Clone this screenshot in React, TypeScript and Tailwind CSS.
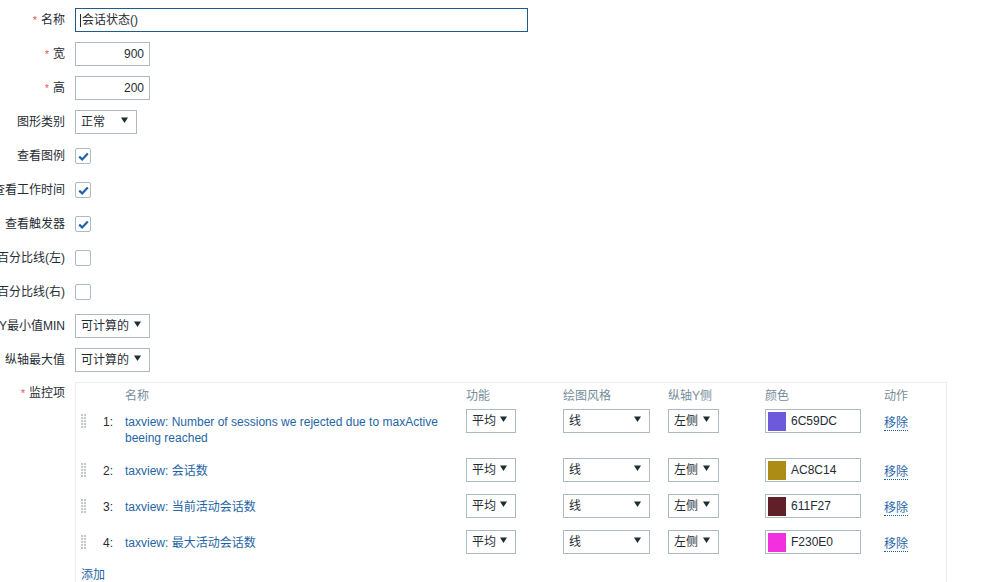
import React from "react";

const FONT = { fontFamily: '"Liberation Sans", Arial, "Noto Sans CJK SC", sans-serif' };

function Arrow() {
  return (
    <svg width="7" height="6" viewBox="0 0 7 6" className="shrink-0 mb-[5px]">
      <polygon points="0,0.5 7,0.5 3.5,6" fill="#1f2c33" />
    </svg>
  );
}

function Select({ value, w }: { value: string; w: string }) {
  return (
    <div
      className={`${w} h-[24px] border border-[#acbbc2] bg-white flex items-center justify-between pl-[5px] pr-[8px] text-[12px] text-[#1f2c33]`}
    >
      <span className="leading-[16px] whitespace-nowrap">{value}</span>
      <Arrow />
    </div>
  );
}

function Check({ on }: { on: boolean }) {
  return (
    <div className="w-[16px] h-[16px] border border-[#acbbc2] rounded-[2px] bg-white flex items-center justify-center">
      {on && (
        <svg width="11" height="9" viewBox="0 0 11 9">
          <path d="M1.2 4.6 L4.2 7.4 L9.8 1.4" fill="none" stroke="#1f65a6" strokeWidth="2.2" />
        </svg>
      )}
    </div>
  );
}

function Label({ text, req }: { text: string; req?: boolean }) {
  return (
    <div className="w-[65px] shrink-0 flex justify-end whitespace-nowrap text-[12px] leading-[16px] text-[#1f2c33]">
      <span>
        {req && <span className="text-[#e45959] text-[11px] align-top mr-[4px]">*</span>}
        {text}
      </span>
    </div>
  );
}

function Row({ label, req, children }: { label: string; req?: boolean; children: React.ReactNode }) {
  return (
    <div className="flex items-center h-[24px] gap-[10px]">
      <Label text={label} req={req} />
      {children}
    </div>
  );
}

function Handle() {
  const dots = [];
  for (let r = 0; r < 5; r++) {
    for (let c = 0; c < 2; c++) {
      dots.push(<rect key={`${r}-${c}`} x={c * 3} y={r * 3} width="2" height="2" fill="#c2c8cc" />);
    }
  }
  return (
    <svg width="5" height="14" viewBox="0 0 5 14" className="mt-[3px]">
      {dots}
    </svg>
  );
}

const items = [
  { n: 1, name: "taxview: Number of sessions we rejected due to maxActive beeing reached", color: "#6C59DC", hex: "6C59DC" },
  { n: 2, name: "taxview: 会话数", color: "#AC8C14", hex: "AC8C14" },
  { n: 3, name: "taxview: 当前活动会话数", color: "#611F27", hex: "611F27" },
  { n: 4, name: "taxview: 最大活动会话数", color: "#F230E0", hex: "F230E0" },
];

const cols = "grid grid-cols-[27px_22px_341px_97px_105px_97px_119px_62px]";

export default function App() {
  return (
    <div style={FONT} className="w-[982px] h-[582px] overflow-hidden bg-white text-[12px] text-[#1f2c33]">
      <div className="pt-[8px] flex flex-col gap-[10px]">
        <Row label="名称" req>
          <div className="w-[453px] h-[24px] border border-[#1f5c87] bg-white flex items-center pl-[4px]">
            <span className="w-px h-[13px] bg-[#1f2c33] mr-[1px]" />
            <span className="leading-[16px]">会话状态()</span>
          </div>
        </Row>
        <Row label="宽" req>
          <div className="w-[75px] h-[24px] border border-[#acbbc2] bg-white flex items-center justify-end pr-[5px]">
            <span className="leading-[16px]">900</span>
          </div>
        </Row>
        <Row label="高" req>
          <div className="w-[75px] h-[24px] border border-[#acbbc2] bg-white flex items-center justify-end pr-[5px]">
            <span className="leading-[16px]">200</span>
          </div>
        </Row>
        <Row label="图形类别">
          <Select value="正常" w="w-[62px]" />
        </Row>
        <Row label="查看图例">
          <Check on />
        </Row>
        <Row label="查看工作时间">
          <Check on />
        </Row>
        <Row label="查看触发器">
          <Check on />
        </Row>
        <Row label="百分比线(左)">
          <Check on={false} />
        </Row>
        <Row label="百分比线(右)">
          <Check on={false} />
        </Row>
        <Row label="Y最小值MIN">
          <Select value="可计算的" w="w-[75px]" />
        </Row>
        <Row label="纵轴最大值">
          <Select value="可计算的" w="w-[75px]" />
        </Row>
        <div className="flex items-start gap-[10px]">
          <div className="pt-[3px]">
            <Label text="监控项" req />
          </div>
          <div className="w-[872px] border border-[#ebeef0] pb-[20px]">
            <div className={`${cols} pt-[6px] leading-[14px] text-[#768d99] whitespace-nowrap`}>
              <div />
              <div />
              <div>名称</div>
              <div>功能</div>
              <div>绘图风格</div>
              <div>纵轴Y侧</div>
              <div>颜色</div>
              <div>动作</div>
            </div>
            {items.map((it) => (
              <div key={it.n} className={`${cols} items-start py-[6px]`}>
                <div className="pl-[5px] pt-[2px]">
                  <Handle />
                </div>
                <div className="pt-[5px] leading-[16px]">{it.n}:</div>
                <div className="pt-[5px] pr-[10px] leading-[16px] text-[#1f65a6]">{it.name}</div>
                <div>
                  <Select value="平均" w="w-[50px]" />
                </div>
                <div>
                  <Select value="线" w="w-[87px]" />
                </div>
                <div>
                  <Select value="左侧" w="w-[51px]" />
                </div>
                <div>
                  <div className="w-[96px] h-[24px] border border-[#acbbc2] bg-white flex items-center pl-[2px] gap-[5px]">
                    <div className="w-[18px] h-[19px]" style={{ backgroundColor: it.color }} />
                    <span className="leading-[16px]">{it.hex}</span>
                  </div>
                </div>
                <div className="pt-[5px]">
                  <span className="leading-[15px] text-[#1f65a6] border-b border-dotted border-[#1f65a6]">移除</span>
                </div>
              </div>
            ))}
            <div className="pl-[5px] pt-[6px]">
              <span className="leading-[15px] text-[#1f65a6] border-b border-dotted border-[#1f65a6]">添加</span>
            </div>
          </div>
        </div>
      </div>
    </div>
  );
}
